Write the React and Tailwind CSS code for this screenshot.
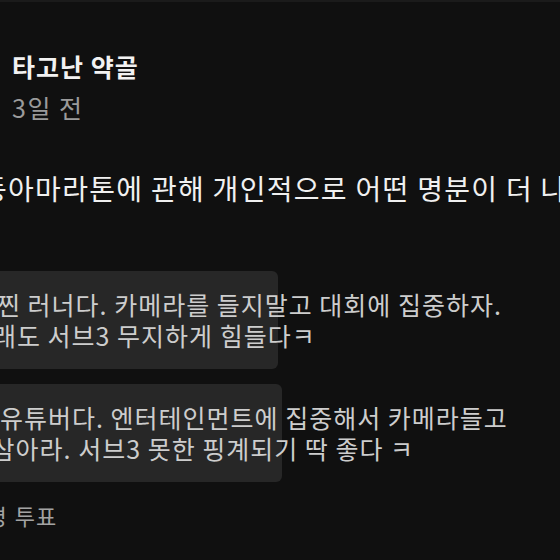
import React from 'react';

const options = [
  {
    id: 1,
    votes: 46,
    barWidth: 318,
    lines: [
      { text: '찐 러너다. 카메라를 들지말고 대회에 집중하자.', shift: 'ml-[-3px]' },
      { text: '그래도 서브3 무지하게 힘들다ㅋ', shift: 'ml-[-31px]' },
    ],
  },
  {
    id: 2,
    votes: 47,
    barWidth: 322,
    lines: [
      { text: '유튜버다. 엔터테인먼트에 집중해서 카메라들고', shift: 'ml-[0px]' },
      { text: '콘텐츠 삼아라. 서브3 못한 핑계되기 딱 좋다 ㅋ', shift: 'ml-[-87px]' },
    ],
  },
];

const PollOption = ({ option }) => (
  <div className="relative ml-[-40px] h-[98px] flex items-center">
    {/* vote fill */}
    <div
      className="absolute left-0 top-0 h-full rounded-md bg-[#272727]"
      style={{ width: option.barWidth }}
    />
    <div className="relative pl-[40px] text-[25px] leading-[31px] tracking-[1px] text-[#cdcdcd] whitespace-nowrap">
      {option.lines.map((line, i) => (
        <span key={i} className={`block ${line.shift}`}>
          {line.text}
        </span>
      ))}
    </div>
  </div>
);

export default function App() {
  return (
    <div
      className="w-[560px] h-[560px] overflow-hidden bg-[#101010] border-t-2 border-[#1b1b1b]"
      style={{ fontFamily: '"Noto Sans CJK KR", "Noto Sans", sans-serif' }}
    >
      <div className="pl-[12px] pt-[48px]">
        <div className="text-[25px] leading-[32px] tracking-[1px] font-bold text-[#f2f2f2]">타고난 약골</div>
        <div className="mt-[10px] text-[25px] leading-[30px] tracking-[1.5px] text-[#9b9b9b]">3일 전</div>
      </div>

      <div className="mt-[48px] ml-[-19px] text-[28px] leading-[36px] tracking-[1.3px] text-[#f0f0f0] whitespace-nowrap">
        동아마라톤에 관해 개인적으로 어떤 명분이 더 나은가요?
      </div>

      <div className="mt-[65px] flex flex-col gap-[15px]">
        {options.map(o => (
          <PollOption key={o.id} option={o} />
        ))}
      </div>

      <div className="mt-[18px] ml-[-40px] flex items-center text-[22px] leading-[30px] tracking-[1px] text-[#a3a3a3] whitespace-nowrap">
        <span>93명</span>
        <span className="ml-[7px]">투표</span>
      </div>
    </div>
  );
}
